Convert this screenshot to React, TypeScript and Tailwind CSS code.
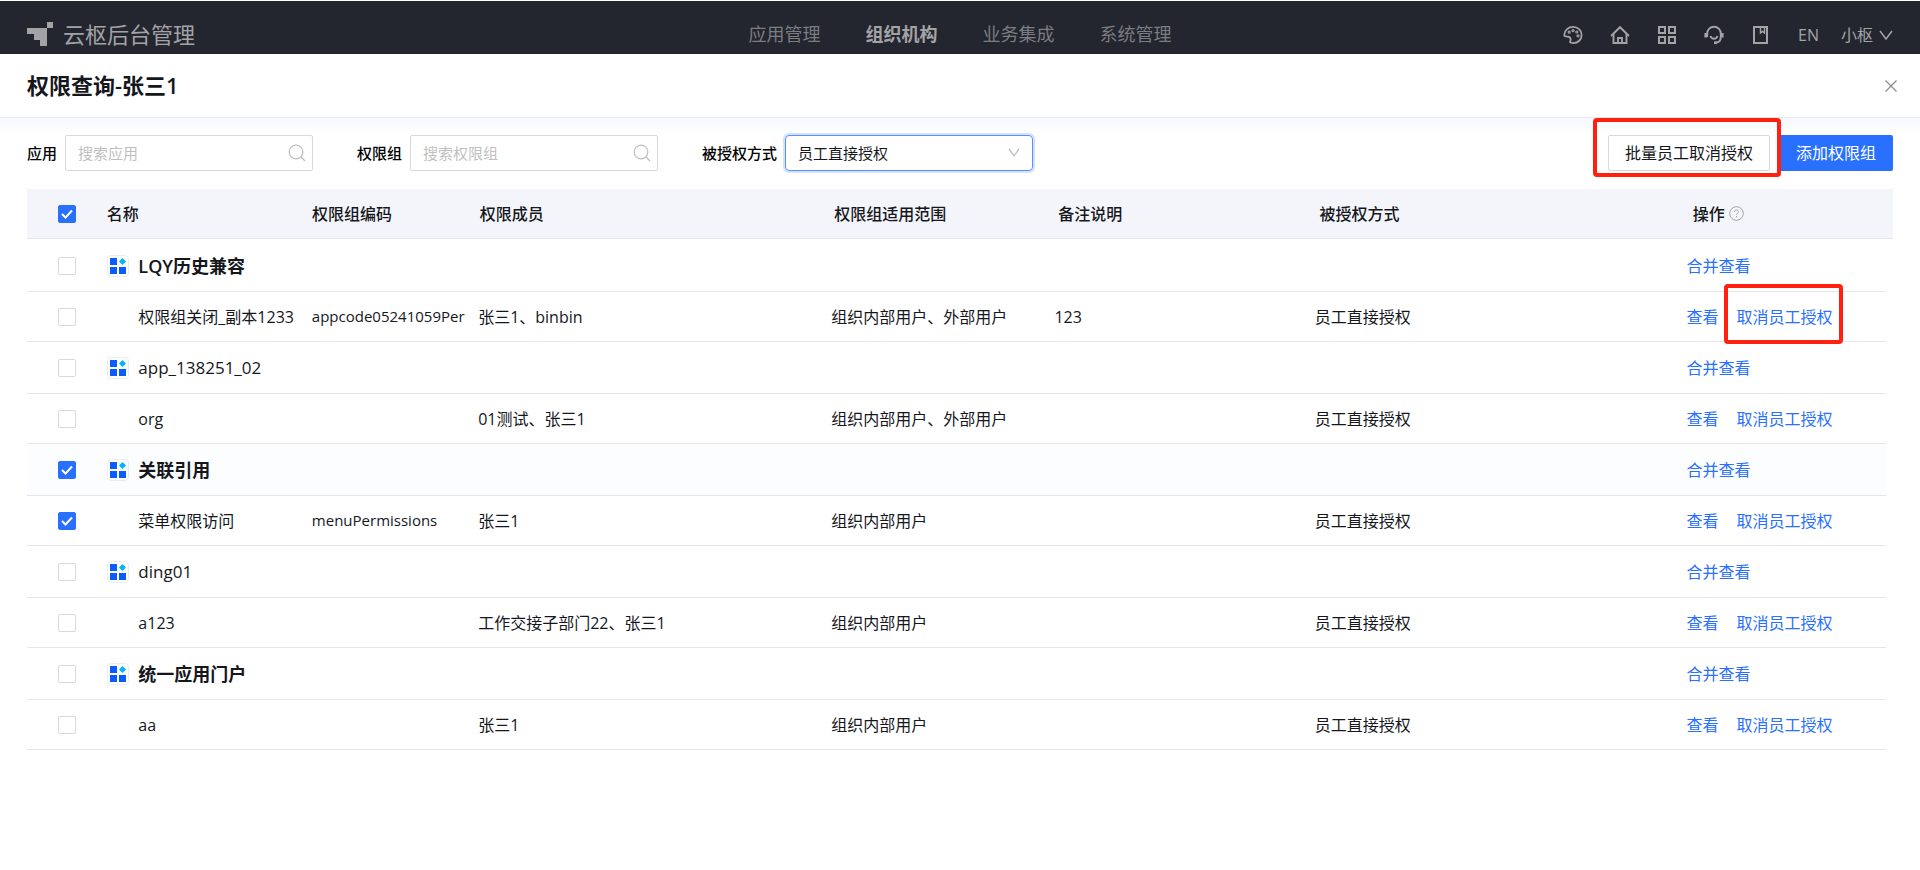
import { useState } from "react";

type Item = {
  name: string;
  code?: string;
  members: string;
  scope: string;
  remark?: string;
  checked?: boolean;
  marked?: boolean;
};

type Group = { app: string; checked?: boolean; items: Item[] };

const navs = ["应用管理", "组织机构", "业务集成", "系统管理"];

const headers = ["名称", "权限组编码", "权限成员", "权限组适用范围", "备注说明", "被授权方式"];

const groups: Group[] = [
  {
    app: "LQY历史兼容",
    items: [
      {
        name: "权限组关闭_副本1233",
        code: "appcode05241059Per",
        members: "张三1、binbin",
        scope: "组织内部用户、外部用户",
        remark: "123",
        marked: true,
      },
    ],
  },
  {
    app: "app_138251_02",
    items: [{ name: "org", members: "01测试、张三1", scope: "组织内部用户、外部用户" }],
  },
  {
    app: "关联引用",
    checked: true,
    items: [
      {
        name: "菜单权限访问",
        code: "menuPermissions",
        members: "张三1",
        scope: "组织内部用户",
        checked: true,
      },
    ],
  },
  {
    app: "ding01",
    items: [{ name: "a123", members: "工作交接子部门22、张三1", scope: "组织内部用户" }],
  },
  {
    app: "统一应用门户",
    items: [{ name: "aa", members: "张三1", scope: "组织内部用户" }],
  },
];

function Logo() {
  return (
    <svg width="26" height="24" viewBox="0 0 26 24" fill="#a3a3a6" aria-hidden="true">
      <path d="M0 6h20v18h-7v-6H7v-6H0z" />
      <path d="M20 0h6v6h-6z" />
    </svg>
  );
}

function PaletteIcon() {
  return (
    <svg width="20" height="20" viewBox="0 0 20 20" fill="none" stroke="currentColor" strokeWidth="1.8" aria-hidden="true">
      <path d="M1.2 10C1.6 5 5.4 1.9 10 1.9c4.9 0 8.6 3.4 8.6 8 0 4.7-3.6 8.2-8.2 8.2-1.8 0-3-.4-3.4-1 .9-1.800.7-3.600-.2-4.700C5.600 11 1.200 12.600 1.200 10z" />
      <circle cx="6.2" cy="7.2" r="1" strokeWidth="1.2" />
      <circle cx="10" cy="5.6" r="1" strokeWidth="1.2" />
      <circle cx="13.8" cy="7" r="1" strokeWidth="1.2" />
      <circle cx="15" cy="10.8" r="1" strokeWidth="1.2" />
    </svg>
  );
}

function HomeIcon() {
  return (
    <svg width="20" height="20" viewBox="0 0 20 20" fill="none" stroke="currentColor" strokeWidth="1.9" aria-hidden="true">
      <path d="M1 11l9-8.800L19 11" />
      <path d="M3.500 9v9h13V9" />
      <path d="M8 18v-5h4v5" />
    </svg>
  );
}

function GridIcon() {
  return (
    <svg width="20" height="20" viewBox="0 0 20 20" fill="none" stroke="currentColor" strokeWidth="2" aria-hidden="true">
      <path d="M2 2h6v6H2zM12 2h6v6h-6zM2 12h6v6H2zM12 12h6v6h-6z" />
    </svg>
  );
}

function HeadsetIcon() {
  return (
    <svg width="20" height="20" viewBox="0 0 20 20" fill="none" stroke="currentColor" strokeWidth="1.9" aria-hidden="true">
      <path d="M3.200 12V8.500a6.800 6.800 0 0 1 13.600 0V12c0 3.500-2.300 5.800-6 5.800" />
      <path d="M1.700 8v4.500M18.300 8v4.500" strokeWidth="2.600" />
      <path d="M6.500 11c.6 1.900 1.800 2.800 3.500 2.800s2.900-.9 3.500-2.800" />
      <path d="M10 17.800h3" strokeWidth="2.600" />
    </svg>
  );
}

function BookIcon() {
  return (
    <svg width="20" height="20" viewBox="0 0 20 20" fill="none" stroke="currentColor" strokeWidth="2" aria-hidden="true">
      <path d="M3 2h13v16H3z" />
      <path d="M9.500 2v6l2-1.500 2 1.500V2" strokeWidth="1.500" />
    </svg>
  );
}

function ChevronIcon() {
  return (
    <svg width="14" height="10" viewBox="0 0 14 10" fill="none" stroke="currentColor" strokeWidth="1.5" aria-hidden="true">
      <path d="M1 1l6 8 6-8" />
    </svg>
  );
}

function SearchIcon() {
  return (
    <svg className="shrink-0 text-[#bfbfbf]" width="18" height="18" viewBox="0 0 18 18" fill="none" stroke="currentColor" strokeWidth="1.2" aria-hidden="true">
      <circle cx="8" cy="8" r="6.8" />
      <path d="M13 13l4 4" />
    </svg>
  );
}

function AppIcon() {
  return (
    <span className="flex size-[22px] shrink-0 items-center justify-center rounded-sm border border-[#ececec] bg-white">
      <svg width="18" height="18" viewBox="0 0 18 18" aria-hidden="true">
        <path d="M1 1h7v7H1zM1 10h7v7H1zM10 10h7v7h-7z" fill="#0a5cff" />
        <path d="M13.500 2l2.500 2.500L13.500 7 11 4.500z" fill="#06b2fd" stroke="#06b2fd" strokeWidth="1.6" strokeLinejoin="round" />
      </svg>
    </span>
  );
}

function Checkbox({ label, defaultChecked }: { label: string; defaultChecked?: boolean }) {
  const [checked, setChecked] = useState(!!defaultChecked);
  return (
    <span className="relative block size-[18px]">
      <input
        type="checkbox"
        aria-label={label}
        checked={checked}
        onChange={(e) => setChecked(e.target.checked)}
        className="block size-[18px] appearance-none rounded-xs border border-[#d9d9d9] bg-white checked:border-[#2970ff] checked:bg-[#2970ff]"
      />
      {checked && (
        <svg className="pointer-events-none absolute inset-0" width="18" height="18" viewBox="0 0 18 18" fill="none" stroke="#fff" strokeWidth="2" aria-hidden="true">
          <path d="M4 9l3.500 3.500L14 5.500" />
        </svg>
      )}
    </span>
  );
}

// Latin-only app names are set lighter than Chinese ones
function AppName({ name }: { name: string }) {
  const latin = /^\w+$/.test(name);
  return (
    <span className={latin ? "text-[17px] font-medium" : "text-lg leading-6 font-semibold"}>
      {name}
    </span>
  );
}

function Cols() {
  return (
    <colgroup>
      <col className="w-[4%]" />
      <col className="w-[11%]" />
      <col className="w-[9%]" />
      <col className="w-[19%]" />
      <col className="w-[12%]" />
      <col className="w-[14%]" />
      <col className="w-[20%]" />
      <col className="w-[11%]" />
    </colgroup>
  );
}

function SearchBox({ id, label, placeholder }: { id: string; label: string; placeholder: string }) {
  return (
    <div className="flex items-center gap-2">
      <label htmlFor={id} className="text-[15px] font-medium text-black">{label}</label>
      <div className="flex h-9 w-[248px] items-center rounded-xs border border-[#d9d9d9] pr-1.5 pl-3">
        <input
          id={id}
          type="text"
          placeholder={placeholder}
          className="w-full min-w-0 flex-1 text-[15px] outline-none placeholder:text-[#bfbfbf]"
        />
        <SearchIcon />
      </div>
    </div>
  );
}

export default function App() {
  return (
    <div className="min-h-screen bg-white font-['Open_Sans','Noto_Sans_CJK_SC',sans-serif] text-[#15171c]">

      {/* Top bar */}
      <header className="mt-px flex h-[53px] items-center bg-[#23262e] px-[27px] pt-3 text-[#a3a3a6]">
        <div className="flex flex-1 items-center gap-2.5">
          <Logo />
          <span className="text-[22px] leading-8">云枢后台管理</span>
        </div>
        <nav className="flex gap-[45px] text-lg leading-6 text-[#7b7d82]">
          {navs.map((nav, i) => (
            <a key={nav} href="#" className={i === 1 ? "font-bold text-[#a3a3a6]" : ""}>
              {nav}
            </a>
          ))}
        </nav>
        <div className="flex flex-1 items-center justify-end gap-[27px] pt-0.5 text-base">
          <button type="button" aria-label="主题"><PaletteIcon /></button>
          <button type="button" aria-label="首页"><HomeIcon /></button>
          <button type="button" aria-label="应用"><GridIcon /></button>
          <button type="button" aria-label="客服"><HeadsetIcon /></button>
          <button type="button" aria-label="文档"><BookIcon /></button>
          <button type="button">EN</button>
          <button type="button" className="-ml-[5px] flex items-center gap-1.5">
            小枢
            <ChevronIcon />
          </button>
        </div>
      </header>

      {/* Page title */}
      <div className="flex h-16 items-center justify-between border-b border-[#e6e8f0] px-[27px]">
        <h1 className="text-[22px] font-semibold">权限查询-张三1</h1>
        <button type="button" aria-label="关闭" className="-mr-1 text-[#8c8c8c]">
          <svg width="12" height="12" viewBox="0 0 12 12" fill="none" stroke="currentColor" strokeWidth="1.2" aria-hidden="true">
            <path d="M.5.5l11 11M11.500.5l-11 11" />
          </svg>
        </button>
      </div>
      <div className="h-[17px] bg-linear-to-b from-[#f7f9ff] to-white" />

      <main className="px-[27px]">

        {/* Filters */}
        <div className="flex items-center justify-between">
          <div className="flex items-center gap-11">
            <SearchBox id="app" label="应用" placeholder="搜索应用" />
            <SearchBox id="group" label="权限组" placeholder="搜索权限组" />
            <div className="flex items-center gap-2">
              <label htmlFor="way" className="text-[15px] font-medium text-black">被授权方式</label>
              <div className="relative">
                <select
                  id="way"
                  className="block h-9 w-[248px] appearance-none rounded-sm border border-[#5490ff] px-3 text-[15px] ring-2 ring-[#2970ff]/20 outline-none"
                >
                  <option>员工直接授权</option>
                </select>
                <span className="pointer-events-none absolute top-[13px] right-[13px] text-[#bfbfbf]">
                  <svg width="12" height="10" viewBox="0 0 12 10" fill="none" stroke="currentColor" strokeWidth="1.3" aria-hidden="true">
                    <path d="M1 1l5 7 5-7" />
                  </svg>
                </span>
              </div>
            </div>
          </div>
          <div className="flex gap-[9px]">
            <div className="relative">
              <button type="button" className="h-9 w-[162px] rounded-xs border border-[#d9d9d9] bg-white">
                批量员工取消授权
              </button>
              <span className="pointer-events-none absolute -top-[17px] -right-[11px] -bottom-1.5 -left-[15px] z-10 rounded-sm border-4 border-[#ff2010]" />
            </div>
            <button type="button" className="h-9 w-[114px] rounded-xs bg-[#2970ff] text-white">
              添加权限组
            </button>
          </div>
        </div>

        {/* Permission table */}
        <table className="mt-[18px] w-full table-fixed border-separate border-spacing-0 text-left">
          <Cols />
          <thead>
            <tr className="h-[50px] bg-[#f4f5fa] [&>th]:border-b [&>th]:border-[#e6e6e6]">
              <th scope="col" className="pl-[31px]">
                <Checkbox label="全选" defaultChecked />
              </th>
              {headers.map((h) => (
                <th key={h} scope="col" className="px-[5px] font-medium">{h}</th>
              ))}
              <th scope="col" className="px-[5px] font-medium">
                <span className="flex items-center gap-1">
                  操作
                  <svg width="15" height="15" viewBox="0 0 15 15" fill="none" stroke="#a3a3a6" aria-hidden="true">
                    <circle cx="7.5" cy="7.5" r="6.8" />
                    <path d="M5.500 6c0-1.200.9-2 2-2s2 .8 2 1.800c0 1.300-2 1.500-2 3M7.500 10v1.200" />
                  </svg>
                </span>
              </th>
            </tr>
          </thead>
        </table>
        <div className="pt-px pr-[7px]">
          <table className="w-full table-fixed border-separate border-spacing-0 text-left whitespace-nowrap">
            <Cols />
            {groups.map((g) => (
              <tbody key={g.app} className="[&_td]:border-b [&_td]:border-[#e6e6e6]">
                <tr className={g.checked ? "h-[52px] bg-[#fbfdff]" : "h-[52px]"}>
                  <td className="pl-[31px]">
                    <Checkbox label={g.app} defaultChecked={g.checked} />
                  </td>
                  <td colSpan={6} className="px-1.5">
                    <span className="flex items-center gap-[9px]">
                      <AppIcon />
                      <AppName name={g.app} />
                    </span>
                  </td>
                  <td className="px-[5px]">
                    <a href="#" className="text-[#2970ff]">合并查看</a>
                  </td>
                </tr>
                {g.items.map((item) => (
                  <tr key={item.name} className="h-[50px]">
                    <td className="pl-[31px]">
                      <Checkbox label={item.name} defaultChecked={item.checked} />
                    </td>
                    <td className="pl-[37px]">{item.name}</td>
                    <td className="px-1.5 text-[15px]">{item.code}</td>
                    <td className="px-[5px]">{item.members}</td>
                    <td className="px-[5px]">{item.scope}</td>
                    <td className="px-[5px]">{item.remark}</td>
                    <td className="px-[5px]">员工直接授权</td>
                    <td className="px-[5px] text-[#2970ff]">
                      <span className="flex gap-[18px]">
                        <a href="#">查看</a>
                        <a href="#" className="relative">
                          取消员工授权
                          {item.marked && (
                            <span className="pointer-events-none absolute -top-[21px] -right-2.5 -bottom-[15px] -left-3 rounded-sm border-4 border-[#ff2010]" />
                          )}
                        </a>
                      </span>
                    </td>
                  </tr>
                ))}
              </tbody>
            ))}
          </table>
        </div>
      </main>
    </div>
  );
}
